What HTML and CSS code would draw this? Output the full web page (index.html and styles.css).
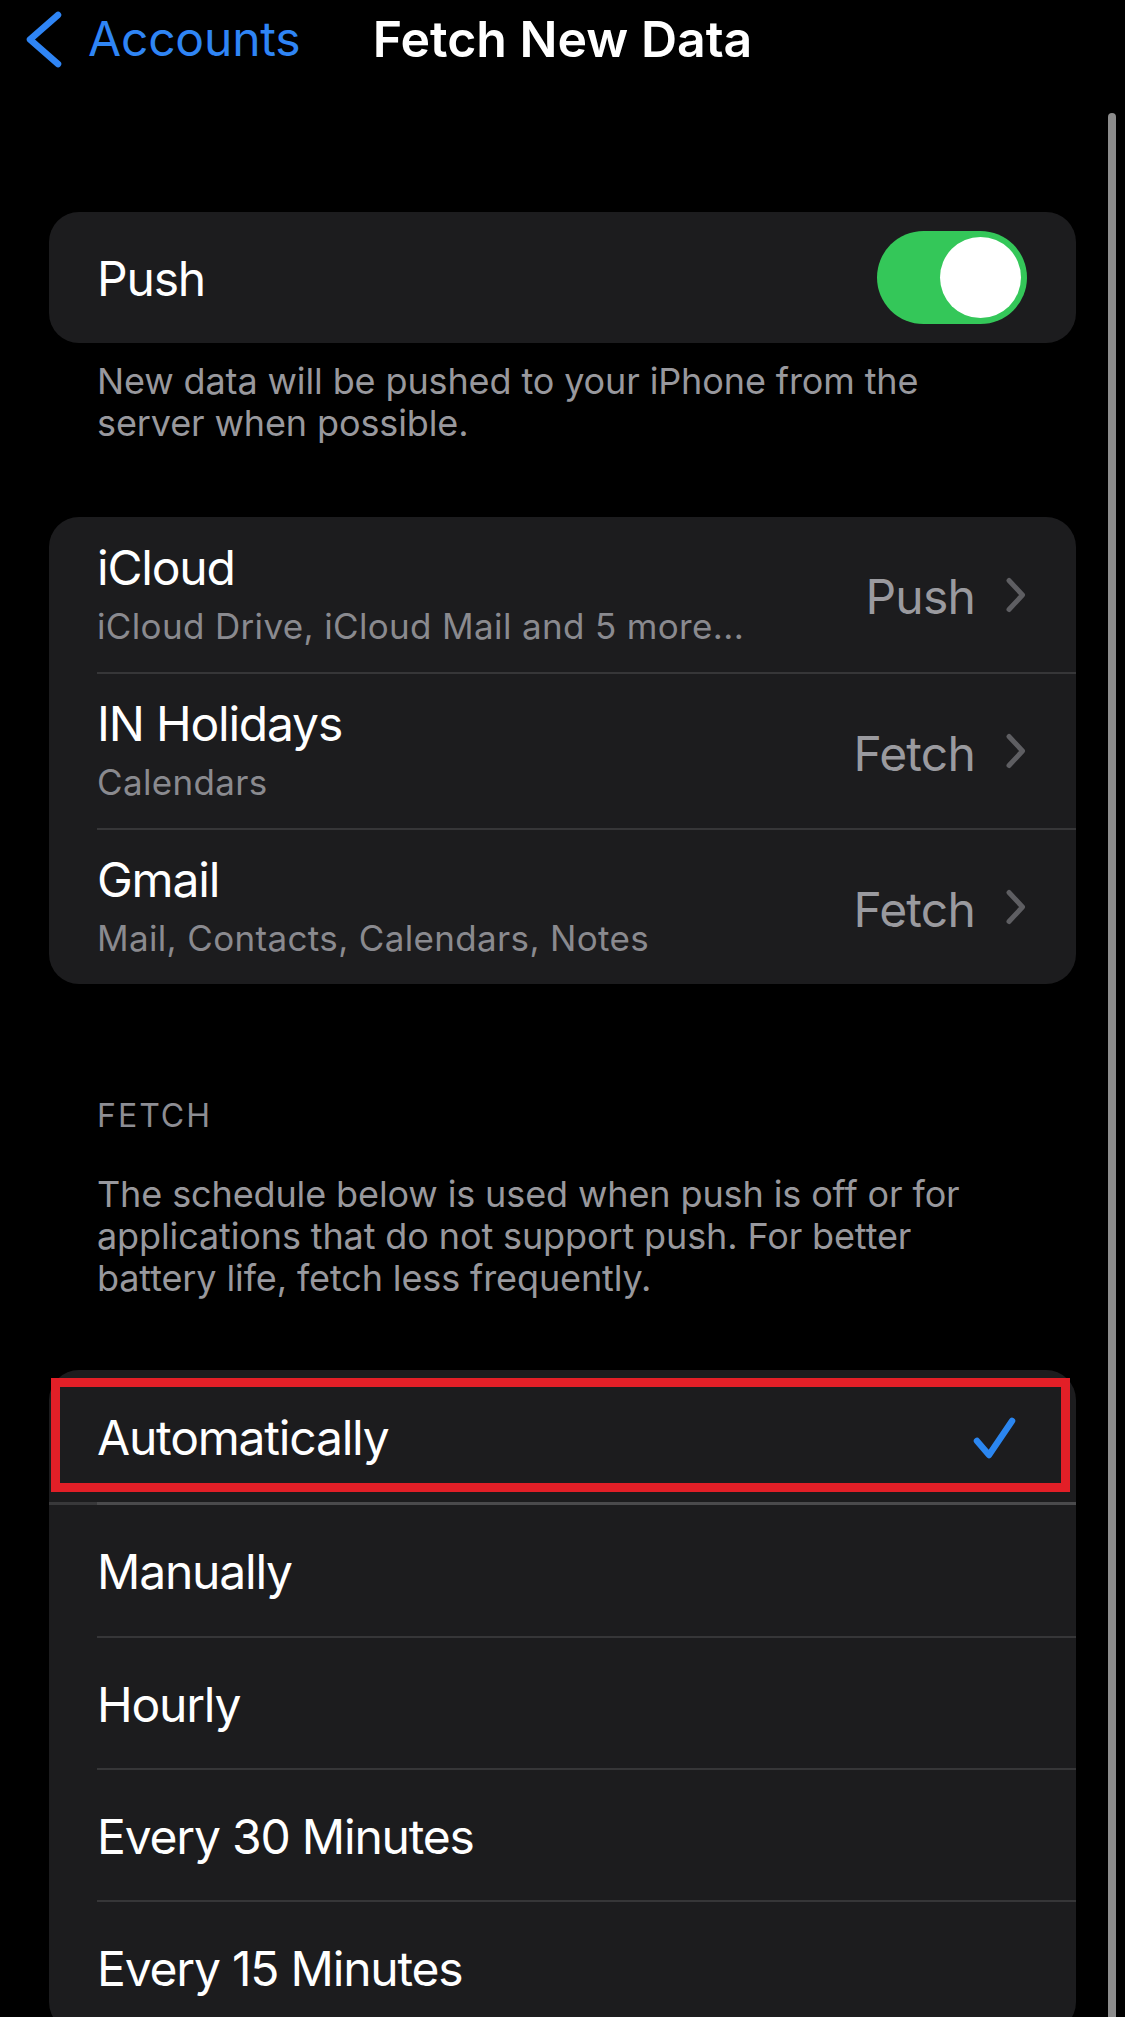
FILE: index.html
```html
<!DOCTYPE html>
<html lang="en">
<head>
<meta charset="utf-8">
<title>Fetch New Data</title>
<link rel="stylesheet" href="styles.css">
</head>
<body>
<div class="screen">
  <header class="nav">
    <div class="back">
      <svg class="back-chevron" viewBox="0 0 44 60" width="44" height="60" aria-hidden="true">
        <path d="M38 6 L10 30.5 L38 55" fill="none" stroke="currentColor" stroke-width="6.5" stroke-linecap="round" stroke-linejoin="round"/>
      </svg>
      <span class="back-label">Accounts</span>
    </div>
    <h1 class="title">Fetch New Data</h1>
    <div class="nav-spacer"></div>
  </header>

  <main class="content">
    <section class="group group-push">
      <div class="card">
        <div class="row row-plain row-push">
          <span class="label">Push</span>
          <span class="toggle"><span class="knob"></span></span>
        </div>
      </div>
      <p class="note">New data will be pushed to your iPhone from the server when possible.</p>
    </section>

    <section class="group group-accounts">
      <div class="card">
        <div class="row row-account">
          <div class="stack">
            <span class="label">iCloud</span>
            <span class="sub">iCloud Drive, iCloud Mail and 5 more...</span>
          </div>
          <span class="value">Push</span>
          <svg class="disclosure" viewBox="0 0 22 36" width="22" height="36" aria-hidden="true"><path d="M4 3.5 L17.5 18 L4 32.5" fill="none" stroke="currentColor" stroke-width="5" stroke-linecap="round" stroke-linejoin="round"/></svg>
        </div>
        <div class="row row-account">
          <div class="stack">
            <span class="label">IN Holidays</span>
            <span class="sub">Calendars</span>
          </div>
          <span class="value">Fetch</span>
          <svg class="disclosure" viewBox="0 0 22 36" width="22" height="36" aria-hidden="true"><path d="M4 3.5 L17.5 18 L4 32.5" fill="none" stroke="currentColor" stroke-width="5" stroke-linecap="round" stroke-linejoin="round"/></svg>
        </div>
        <div class="row row-account">
          <div class="stack">
            <span class="label">Gmail</span>
            <span class="sub">Mail, Contacts, Calendars, Notes</span>
          </div>
          <span class="value">Fetch</span>
          <svg class="disclosure" viewBox="0 0 22 36" width="22" height="36" aria-hidden="true"><path d="M4 3.5 L17.5 18 L4 32.5" fill="none" stroke="currentColor" stroke-width="5" stroke-linecap="round" stroke-linejoin="round"/></svg>
        </div>
      </div>
    </section>

    <section class="group group-fetch">
      <h2 class="section-title">FETCH</h2>
      <p class="note note-fetch">The schedule below is used when push is off or for applications that do not support push. For better battery life, fetch less frequently.</p>
      <div class="card">
        <div class="row row-plain row-option row-selected">
          <span class="label">Automatically</span>
          <svg class="check" viewBox="0 0 50 50" width="50" height="50" aria-hidden="true"><path d="M7 28 L19 42 L42 8" fill="none" stroke="currentColor" stroke-width="6.5" stroke-linecap="round" stroke-linejoin="round"/></svg>
          <span class="highlight"></span>
        </div>
        <div class="row row-plain row-option row-after-selected">
          <span class="label">Manually</span>
        </div>
        <div class="row row-plain row-option">
          <span class="label">Hourly</span>
        </div>
        <div class="row row-plain row-option">
          <span class="label">Every 30 Minutes</span>
        </div>
        <div class="row row-plain row-option">
          <span class="label">Every 15 Minutes</span>
        </div>
      </div>
    </section>
  </main>

  <div class="scrollbar"></div>
</div>
</body>
</html>
```

FILE: styles.css
```css
* {
  box-sizing: border-box;
  margin: 0;
  padding: 0;
}

html,
body {
  background: #000;
}

body {
  width: 1125px;
  height: 2017px;
  overflow: hidden;
  font-family: Inter, "Noto Sans", "Liberation Sans", sans-serif;
  color: #fff;
}

.screen {
  position: relative;
  width: 1125px;
  height: 2017px;
  overflow: hidden;
}

/* ---------- navigation bar ---------- */
.nav {
  display: grid;
  grid-template-columns: 1fr auto 1fr;
  align-items: center;
  height: 60px;
  margin-top: 9px;
}

.back {
  display: flex;
  align-items: center;
  gap: 24px;
  padding-left: 20px;
  color: #2f85f5;
}

.back-chevron {
  display: block;
  flex: none;
}

.back-label {
  font-size: 48px;
  line-height: 60px;
  letter-spacing: -0.2px;
}

.title {
  font-size: 50px;
  font-weight: 600;
  line-height: 60px;
  letter-spacing: 0;
  color: #fff;
}

/* ---------- content ---------- */
.content {
  padding: 0 49px;
}

.card {
  background: #1c1c1e;
  border-radius: 30px;
  padding-left: 48px;
}

.row {
  position: relative;
  display: flex;
  align-items: center;
  border-top: 2px solid #363638;
  padding-right: 49px;
}

.row:first-child {
  border-top: none;
}

.label {
  font-size: 48px;
  line-height: 58px;
  letter-spacing: -1.2px;
  color: #fff;
}

.group-push {
  margin-top: 143px;
}

.row-push {
  height: 131px;
  padding-top: 3px;
}

.toggle {
  margin-left: auto;
  width: 150px;
  height: 93px;
  margin-top: -3px;
  border-radius: 47px;
  background: #34c759;
  padding: 6px;
  display: flex;
  justify-content: flex-end;
}

.knob {
  width: 81px;
  height: 81px;
  border-radius: 50%;
  background: #fff;
}

.note {
  max-width: 928px;
  padding-left: 48px;
  font-size: 36px;
  line-height: 42px;
  letter-spacing: -0.12px;
  color: #98989d;
  margin-top: 17px;
}

/* ---------- accounts ---------- */
.group-accounts {
  margin-top: 73px;
}

.row-account {
  height: 156px;
  align-items: flex-start;
}

.row-account:first-child {
  height: 155px;
}

.stack {
  display: flex;
  flex-direction: column;
  padding-top: 22px;
}

.row-account + .row-account .stack {
  padding-top: 21px;
}

.sub {
  font-size: 35px;
  line-height: 48px;
  margin-top: 5px;
  letter-spacing: 0.35px;
  color: #8a8a8f;
}

.value {
  margin-left: auto;
  align-self: center;
  padding-top: 5px;
  font-size: 48px;
  line-height: 58px;
  letter-spacing: -0.8px;
  color: #9a9a9f;
}

.disclosure {
  align-self: center;
  margin-left: 30px;
  color: #5e5e62;
  flex: none;
}

/* ---------- fetch schedule ---------- */
.group-fetch {
  margin-top: 112px;
}

.section-title {
  padding-left: 48px;
  font-size: 32px;
  font-weight: 400;
  line-height: 40px;
  letter-spacing: 2px;
  color: #8d8d93;
}

.note-fetch {
  margin-top: 37px;
}

.group-fetch .card {
  margin-top: 71px;
}

.row-option {
  height: 132px;
  padding-top: 3px;
}

.row-after-selected {
  height: 134px;
  border-top: 3px solid #4a4a4c;
}

.row-after-selected::before {
  content: "";
  position: absolute;
  left: -48px;
  top: -3px;
  width: 48px;
  height: 3px;
  background: #38383a;
}

.check {
  margin-left: auto;
  margin-right: 7px;
  color: #2b86f0;
  flex: none;
}

.highlight {
  position: absolute;
  left: -46px;
  right: 6px;
  top: 8px;
  bottom: 10px;
  border: 9px solid #e21f27;
  pointer-events: none;
}

/* ---------- scroll indicator ---------- */
.scrollbar {
  position: absolute;
  top: 113px;
  right: 9px;
  bottom: -10px;
  width: 8px;
  border-radius: 4px;
  background: #8c8c8c;
}
```
